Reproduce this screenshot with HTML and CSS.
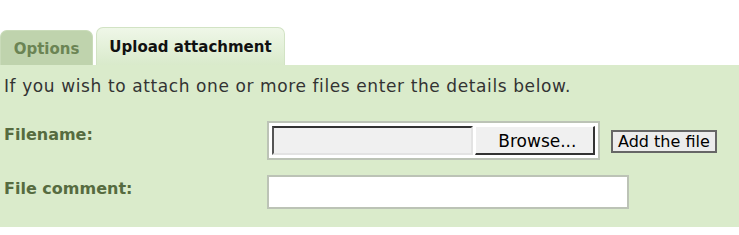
FILE: index.html
```html
<!DOCTYPE html>
<html lang="en">

<head>
  <meta charset="UTF-8" />
  <meta name="viewport" content="width=device-width, initial-scale=1.0" />
  <title>Upload attachment</title>
  <link rel="stylesheet" href="styles.css">
</head>

<body>
  <div class="tabs">
    <div class="tab">Options</div>
    <div class="tab active">Upload attachment</div>
  </div>

  <div class="panel">
    <p class="intro">If you wish to attach one or more files enter the details below.</p>

    <div class="row">
      <label class="label">Filename:</label>
      <div class="file-box">
        <span class="file-field"></span>
        <button class="browse" type="button">Browse...</button>
      </div>
      <button class="add-btn" type="button">Add the file</button>
    </div>

    <div class="row">
      <label class="label">File comment:</label>
      <input class="comment" type="text" />
    </div>
  </div>
</body>

</html>
```

FILE: styles.css
```css
:root {
  --panel-bg: #daebcb;
  --tab-bg: #bfd3ad;
  --label-color: #566b40;
  --text-main: #333333;
  --box-border: #bcc3b6;
}

* {
  box-sizing: border-box;
}

body {
  margin: 0;
  padding-top: 27px;
  font-family: "DejaVu Sans", Verdana, sans-serif;
  background: #ffffff;
  color: var(--text-main);
}

.tabs {
  display: flex;
  align-items: flex-end;
  gap: 3px;
  height: 38px;
}

.tab {
  height: 35px;
  width: 93px;
  padding-top: 9px;
  text-align: center;
  font-size: 15px;
  font-weight: bold;
  color: #6b8454;
  background: var(--tab-bg);
  border-radius: 7px 7px 0 0;
  border: 1px solid #c9dbb9;
  border-bottom: none;
}

.tab.active {
  height: 38px;
  width: 189px;
  padding-top: 10px;
  color: #111111;
  background: linear-gradient(#eff7e8, #d9eacb);
  border-color: #d2e3c4;
}

.panel {
  background: var(--panel-bg);
  padding: 11px 4px 18px;
  height: 162px;
}

.intro {
  margin: 0 0 25px;
  font-size: 17px;
  letter-spacing: 0.6px;
}

.row {
  display: flex;
  align-items: flex-start;
  margin-bottom: 15px;
}

.label {
  width: 263px;
  font-size: 16px;
  font-weight: bold;
  color: var(--label-color);
  padding-top: 4px;
}

.file-box {
  display: flex;
  gap: 2px;
  width: 333px;
  height: 39px;
  padding: 3px;
  background: #ffffff;
  border: 2px solid var(--box-border);
}

.file-field {
  width: 202px;
  height: 29px;
  background: #f0f0f0;
  border-style: solid;
  border-width: 2px;
  border-color: #333333 #e3e3e3 #e3e3e3 #555555;
}

.browse {
  width: 121px;
  height: 29px;
  padding: 2px 0 0 6px;
  font-family: "DejaVu Sans", Tahoma, sans-serif;
  font-size: 17px;
  color: #000000;
  background: #f0f0f0;
  border-style: solid;
  border-width: 1px 2px 2px 1px;
  border-color: #ffffff #333333 #333333 #ffffff;
}

.add-btn {
  margin: 9px 0 0 11px;
  height: 23px;
  padding: 0 5px;
  font-family: "DejaVu Sans", Tahoma, sans-serif;
  font-size: 16px;
  line-height: 17px;
  color: #000000;
  background: #ececec;
  border: 2px solid #666666;
}

.comment {
  width: 362px;
  height: 34px;
  background: #ffffff;
  border: 2px solid var(--box-border);
}
```
